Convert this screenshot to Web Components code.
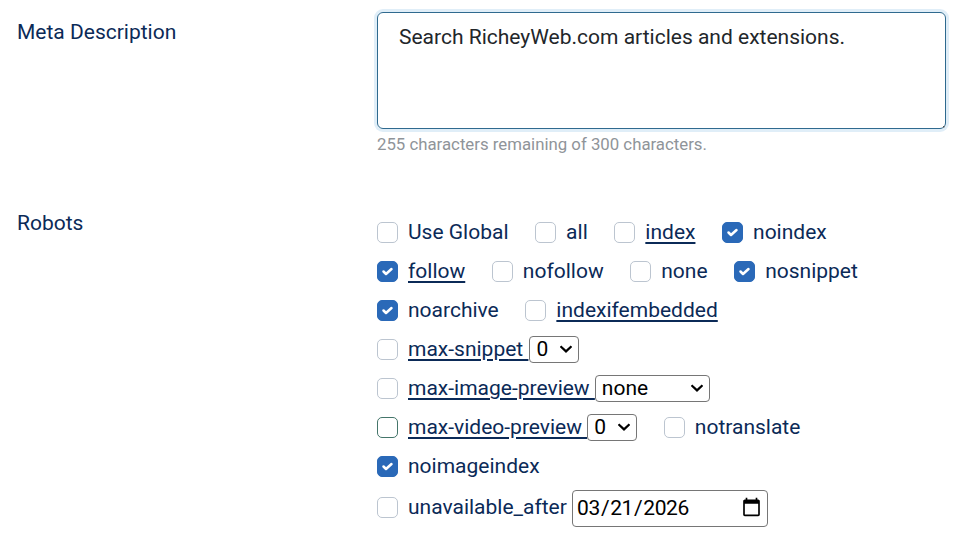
<!DOCTYPE html>
<html>
<head>
<meta charset="utf-8">
<style>
  body { margin: 0; min-height: 540px; background: #fff; font-family: Roboto, sans-serif; color: #0b2a57; }
</style>
</head>
<body>
<seo-form>
  <form-row label="Meta Description" style="--row-pad: 12px; --label-pad: 6px; --row-bottom: 55px">
    <meta-box remaining="255" total="300">Search RicheyWeb.com articles and extensions.</meta-box>
  </form-row>
  <form-row label="Robots">
    <check-group>
      <check-line>
        <robot-check label="Use Global"></robot-check>
        <robot-check label="all"></robot-check>
        <robot-check label="index" linked></robot-check>
        <robot-check label="noindex" checked></robot-check>
      </check-line>
      <check-line>
        <robot-check label="follow" linked checked></robot-check>
        <robot-check label="nofollow"></robot-check>
        <robot-check label="none"></robot-check>
        <robot-check label="nosnippet" checked></robot-check>
      </check-line>
      <check-line>
        <robot-check label="noarchive" checked></robot-check>
        <robot-check label="indexifembedded" linked></robot-check>
      </check-line>
      <check-line>
        <robot-check label="max-snippet&nbsp;" linked><select style="width:50px;margin-left:1px"><option>0</option></select></robot-check>
      </check-line>
      <check-line>
        <robot-check label="max-image-preview&nbsp;" linked><select style="width:115px"><option>none</option></select></robot-check>
      </check-line>
      <check-line>
        <robot-check label="max-video-preview&nbsp;" linked dark><select style="width:50px"><option>0</option></select></robot-check>
        <robot-check label="notranslate"></robot-check>
      </check-line>
      <check-line>
        <robot-check label="noimageindex" checked></robot-check>
      </check-line>
      <check-line>
        <robot-check label="unavailable_after&nbsp;"><input type="date" value="2026-03-21" style="width:196px"></robot-check>
      </check-line>
    </check-group>
  </form-row>
</seo-form>
<script>
  class SeoForm extends HTMLElement {
    constructor() {
      super();
      this.attachShadow({ mode: "open" });
      this.shadowRoot.innerHTML = `
        <style>
          :host { display: block; font-family: Roboto, sans-serif; color: #0b2a57; }
        </style>
        <slot></slot>`;
    }
  }

  class FormRow extends HTMLElement {
    constructor() {
      super();
      this.attachShadow({ mode: "open" });
      this.shadowRoot.innerHTML = `
        <style>
          :host {
            display: grid;
            grid-template-columns: 360px 569px;
            padding: var(--row-pad, 0) 0 var(--row-bottom, 0) 17px;
          }
          .label { font-size: 21px; line-height: 29px; padding-top: var(--label-pad, 0); }
        </style>
        <div class="label"></div>
        <div><slot></slot></div>`;
      this.shadowRoot.querySelector(".label").textContent = this.getAttribute("label");
    }
  }

  class MetaBox extends HTMLElement {
    constructor() {
      super();
      this.attachShadow({ mode: "open" });
      this.shadowRoot.innerHTML = `
        <style>
          :host { display: block; }
          .area {
            box-sizing: border-box;
            height: 117px;
            padding: 9px 21px;
            border: 1px solid #2f6a8f;
            border-radius: 6px;
            box-shadow: 0 0 0 3px #e0eef8;
            font-size: 21px;
            line-height: 31px;
            color: #22262a;
            position: relative;
          }
          .grip { position: absolute; right: 0; bottom: 0; }
          .hint { margin-top: 5px; font-size: 16.8px; line-height: 20px; color: #8f9499; }
        </style>
        <div class="area"><slot></slot>
          <svg class="grip" width="5" height="5" viewBox="0 0 5 5"><path d="M3 3h1.5v1.5h-1.5z" fill="#555"/></svg>
        </div>
        <div class="hint"></div>`;
      this.shadowRoot.querySelector(".hint").textContent =
        this.getAttribute("remaining") + " characters remaining of " + this.getAttribute("total") + " characters.";
    }
  }

  class CheckGroup extends HTMLElement {
    constructor() {
      super();
      this.attachShadow({ mode: "open" });
      this.shadowRoot.innerHTML = `
        <style>
          :host { display: flex; flex-direction: column; gap: 9px; padding-top: 8px; }
        </style>
        <slot></slot>`;
    }
  }

  class CheckLine extends HTMLElement {
    constructor() {
      super();
      this.attachShadow({ mode: "open" });
      this.shadowRoot.innerHTML = `
        <style>
          :host { display: flex; align-items: center; gap: 26.6px; min-height: 30px; }
        </style>
        <slot></slot>`;
    }
  }

  const chevron = "url(\"data:image/svg+xml,%3Csvg xmlns='http://www.w3.org/2000/svg' width='14' height='8' viewBox='0 0 14 8'%3E%3Cpath d='M1.5 1.2L7 6.4L12.5 1.2' stroke='%23000' stroke-width='2.2' fill='none'/%3E%3C/svg%3E\")";
  const calendar = "url(\"data:image/svg+xml,%3Csvg xmlns='http://www.w3.org/2000/svg' width='16' height='17' viewBox='0 0 16 17'%3E%3Crect x='1' y='3' width='14' height='13' rx='1.5' fill='none' stroke='%23000' stroke-width='2'/%3E%3Cpath d='M1 3h14v3.5H1zM3.2 0h2v3h-2zM10.8 0h2v3h-2z' fill='%23000'/%3E%3C/svg%3E\")";

  class RobotCheck extends HTMLElement {
    constructor() {
      super();
      this.attachShadow({ mode: "open" });
      this.shadowRoot.innerHTML = `
        <style>
          :host { display: flex; align-items: center; font-size: 21px; line-height: 30px; color: #0b2a57; }
          .box {
            box-sizing: border-box;
            width: 21px; height: 21px;
            margin-right: 10px;
            border: 1px solid #bcc5d0;
            border-radius: 5px;
            background: #fff;
            display: flex; align-items: center; justify-content: center;
            flex: none;
          }
          :host([checked]) .box { background: #2a69b8; border-color: #2a69b8; }
          :host([dark]) .box { border-color: #44756a; }
          .box svg { display: none; }
          :host([checked]) .box svg { display: block; }
          :host([linked]) .text { text-decoration: underline; text-underline-offset: 3px; }
          ::slotted(select), ::slotted(input) {
            box-sizing: border-box;
            font: 21px Roboto, sans-serif;
            color: #000;
            border: 1px solid #767676;
            border-radius: 4px;
            height: 27px;
            margin: 0;
          }
          ::slotted(select) {
            appearance: none;
            padding: 0 0 0 6px;
            background: #fff ${chevron} no-repeat right 5px center;
          }
          ::slotted(input) {
            background: #fff;
            height: 37px;
            margin: 0 0 -3px;
            padding: 0 3px 2px 3px;
            letter-spacing: -0.4px;
          }
          ::slotted(input)::-webkit-calendar-picker-indicator {
            width: 16px;
            height: 17px;
            padding: 0;
            margin: 3px 0 0;
            opacity: 1;
            background: ${calendar} no-repeat center;
          }
          .text { white-space: pre; }
        </style>
        <span class="box"><svg width="13" height="11" viewBox="0 0 13 11"><path d="M2.5 5.5L5 8L10.5 3" stroke="#fff" stroke-width="2.5" stroke-linecap="round" stroke-linejoin="round" fill="none"/></svg></span>
        <span class="text"></span>
        <slot></slot>`;
      this.shadowRoot.querySelector(".text").innerHTML = this.getAttribute("label");
    }
  }

  customElements.define("seo-form", SeoForm);
  customElements.define("form-row", FormRow);
  customElements.define("meta-box", MetaBox);
  customElements.define("check-group", CheckGroup);
  customElements.define("check-line", CheckLine);
  customElements.define("robot-check", RobotCheck);
</script>
</body>
</html>
